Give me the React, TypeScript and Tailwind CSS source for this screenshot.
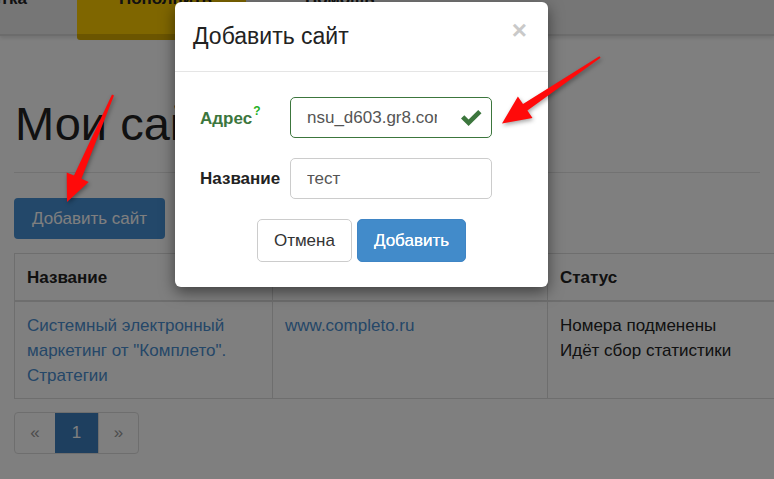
import React from "react";

const font = { fontFamily: '"Liberation Sans", Arial, sans-serif' };

const NavBar = () => (
  <div className="h-[36px] bg-[#ececec] border-b-2 border-[#d9d9d9] shadow-[0_2px_4px_rgba(0,0,0,0.12)] flex items-start">
    <div className="-ml-[50px] -mt-[11px] text-[17px] leading-[20px] font-bold text-[#222]">Разметка</div>
    <div className="ml-[50px] w-[169px] h-[40px] bg-[#ffcc00] border-b-[6px] border-[#d6ab00] rounded-b-[3px] pl-[42px]">
      <div className="-mt-[11px] text-[17px] leading-[20px] font-bold text-[#222]">Пополнить</div>
    </div>
    <div className="ml-[59px] -mt-[11px] text-[17px] leading-[20px] font-bold text-[#222]">Помощь</div>
  </div>
);

const Page = () => (
  <div className="bg-white w-[774px] h-[479px]">
    <NavBar />
    <div className="px-[14px]">
      <h1 className="mt-[62px] ml-[1px] text-[47px] leading-[52px] text-[#222]">Мои сайты</h1>
      <div className="mt-[22px] border-t border-[#e5e5e5]" />
      <button className="mt-[25px] w-[151px] h-[41px] rounded-[4px] bg-[#4790d4] text-white text-[17px]">
        Добавить сайт
      </button>
      <table className="mt-[14px] w-[820px] border-collapse text-[17px] leading-[25px] text-[#222]">
        <thead>
          <tr>
            <th className="w-[258px] text-left font-bold px-[12px] pt-[11px] pb-[10px] border border-[#dddddd] border-b-2">Название</th>
            <th className="w-[275px] text-left font-bold px-[12px] pt-[11px] pb-[10px] border border-[#dddddd] border-b-2">Адрес сайта</th>
            <th className="text-left font-bold px-[12px] pt-[11px] pb-[10px] border border-[#dddddd] border-b-2">Статус</th>
          </tr>
        </thead>
        <tbody>
          <tr>
            <td className="align-top px-[12px] pt-[11px] pb-[10px] border border-[#dddddd] text-[#4a8ed0]">
              Системный электронный маркетинг от "Комплето". Стратегии
            </td>
            <td className="align-top px-[12px] pt-[11px] pb-[10px] border border-[#dddddd] text-[#4a8ed0]">www.completo.ru</td>
            <td className="align-top px-[12px] pt-[11px] pb-[10px] border border-[#dddddd]">
              <div>Номера подменены</div>
              <div>Идёт сбор статистики</div>
            </td>
          </tr>
        </tbody>
      </table>
      <div className="mt-[13px] inline-flex h-[42px] text-[17px] rounded-[4px] border border-[#dddddd] overflow-hidden">
        <span className="w-[40px] flex items-center justify-center text-[#999]">«</span>
        <span className="w-[43px] flex items-center justify-center bg-[#3c7fbf] text-white">1</span>
        <span className="w-[40px] flex items-center justify-center border-l border-[#dddddd] text-[#999]">»</span>
      </div>
    </div>
  </div>
);

const Check = () => (
  <svg width="21" height="16" viewBox="0 0 21 16">
    <polygon points="0,8.5 3.3,5.2 7.6,9.5 17.2,0 20.5,3.3 7.6,16" fill="#3c763d" />
  </svg>
);

const Modal = () => (
  <div className="absolute left-[175px] top-[2px] w-[373px] bg-white rounded-[6px] shadow-[0_5px_15px_rgba(0,0,0,0.5)]">
    <div className="h-[70px] border-b border-[#e5e5e5] flex items-start justify-between pl-[18px] pr-[21px]">
      <div className="mt-[19px] text-[23px] leading-[30px] text-[#222]">Добавить сайт</div>
      <div className="mt-[15px] text-[26px] leading-[26px] font-bold text-[#c9c9c9]">×</div>
    </div>
    <div className="pt-[25px] px-[25px] pb-[25px]">
      <div className="flex items-center h-[41px]">
        <div className="w-[90px] text-[17px] font-bold text-[#3c763d] pt-[3px]">
          Адрес<sup className="ml-[1px] text-[12px] text-[#25b025] relative -top-[9px]">?</sup>
        </div>
        <div className="relative w-[202px] h-[41px]">
          <input
            readOnly
            value="nsu_d603.gr8.com"
            className="w-full h-full rounded-[5px] border border-[#3c763d] pl-[16px] pr-[54px] text-[17px] text-[#555] outline-none"
            style={font}
          />
          <div className="absolute right-[10px] top-[13px]">
            <Check />
          </div>
        </div>
      </div>
      <div className="flex items-center h-[41px] mt-[20px]">
        <div className="w-[90px] text-[17px] font-bold text-[#222]">Название</div>
        <input
          readOnly
          value="тест"
          className="w-[202px] h-[41px] rounded-[5px] border border-[#cccccc] pl-[16px] text-[17px] text-[#555] outline-none"
          style={font}
        />
      </div>
      <div className="mt-[20px] flex justify-center gap-[5px]">
        <button className="h-[43px] px-[16px] rounded-[5px] border border-[#cccccc] bg-white text-[17px] text-[#333]">
          Отмена
        </button>
        <button className="h-[43px] px-[16px] rounded-[5px] border border-[#3f85c5] bg-[#428bca] text-[17px] text-white [text-shadow:0_0_0.4px_#fff]">
          Добавить
        </button>
      </div>
    </div>
  </div>
);

const Arrows = () => (
  <svg
    className="absolute inset-0 pointer-events-none"
    width="774"
    height="479"
    viewBox="0 0 774 479"
    style={{ filter: "drop-shadow(1px 2px 2px rgba(0,0,0,0.35))" }}
  >
    <polygon points="114,95.4 81.4,178.8 88.7,181.9 67,202 66.7,172.5 74,175.6 112,94.6" fill="#ff0a0a" />
    <polygon points="600.6,57.8 527.4,110.6 532.5,118.1 502,123.5 517.9,96.5 523,104 599.4,56.2" fill="#ff0a0a" />
  </svg>
);

export default function App() {
  return (
    <div className="relative w-[774px] h-[479px] overflow-hidden" style={font}>
      <Page />
      <div className="absolute inset-0 bg-black/50" />
      <Modal />
      <Arrows />
    </div>
  );
}
